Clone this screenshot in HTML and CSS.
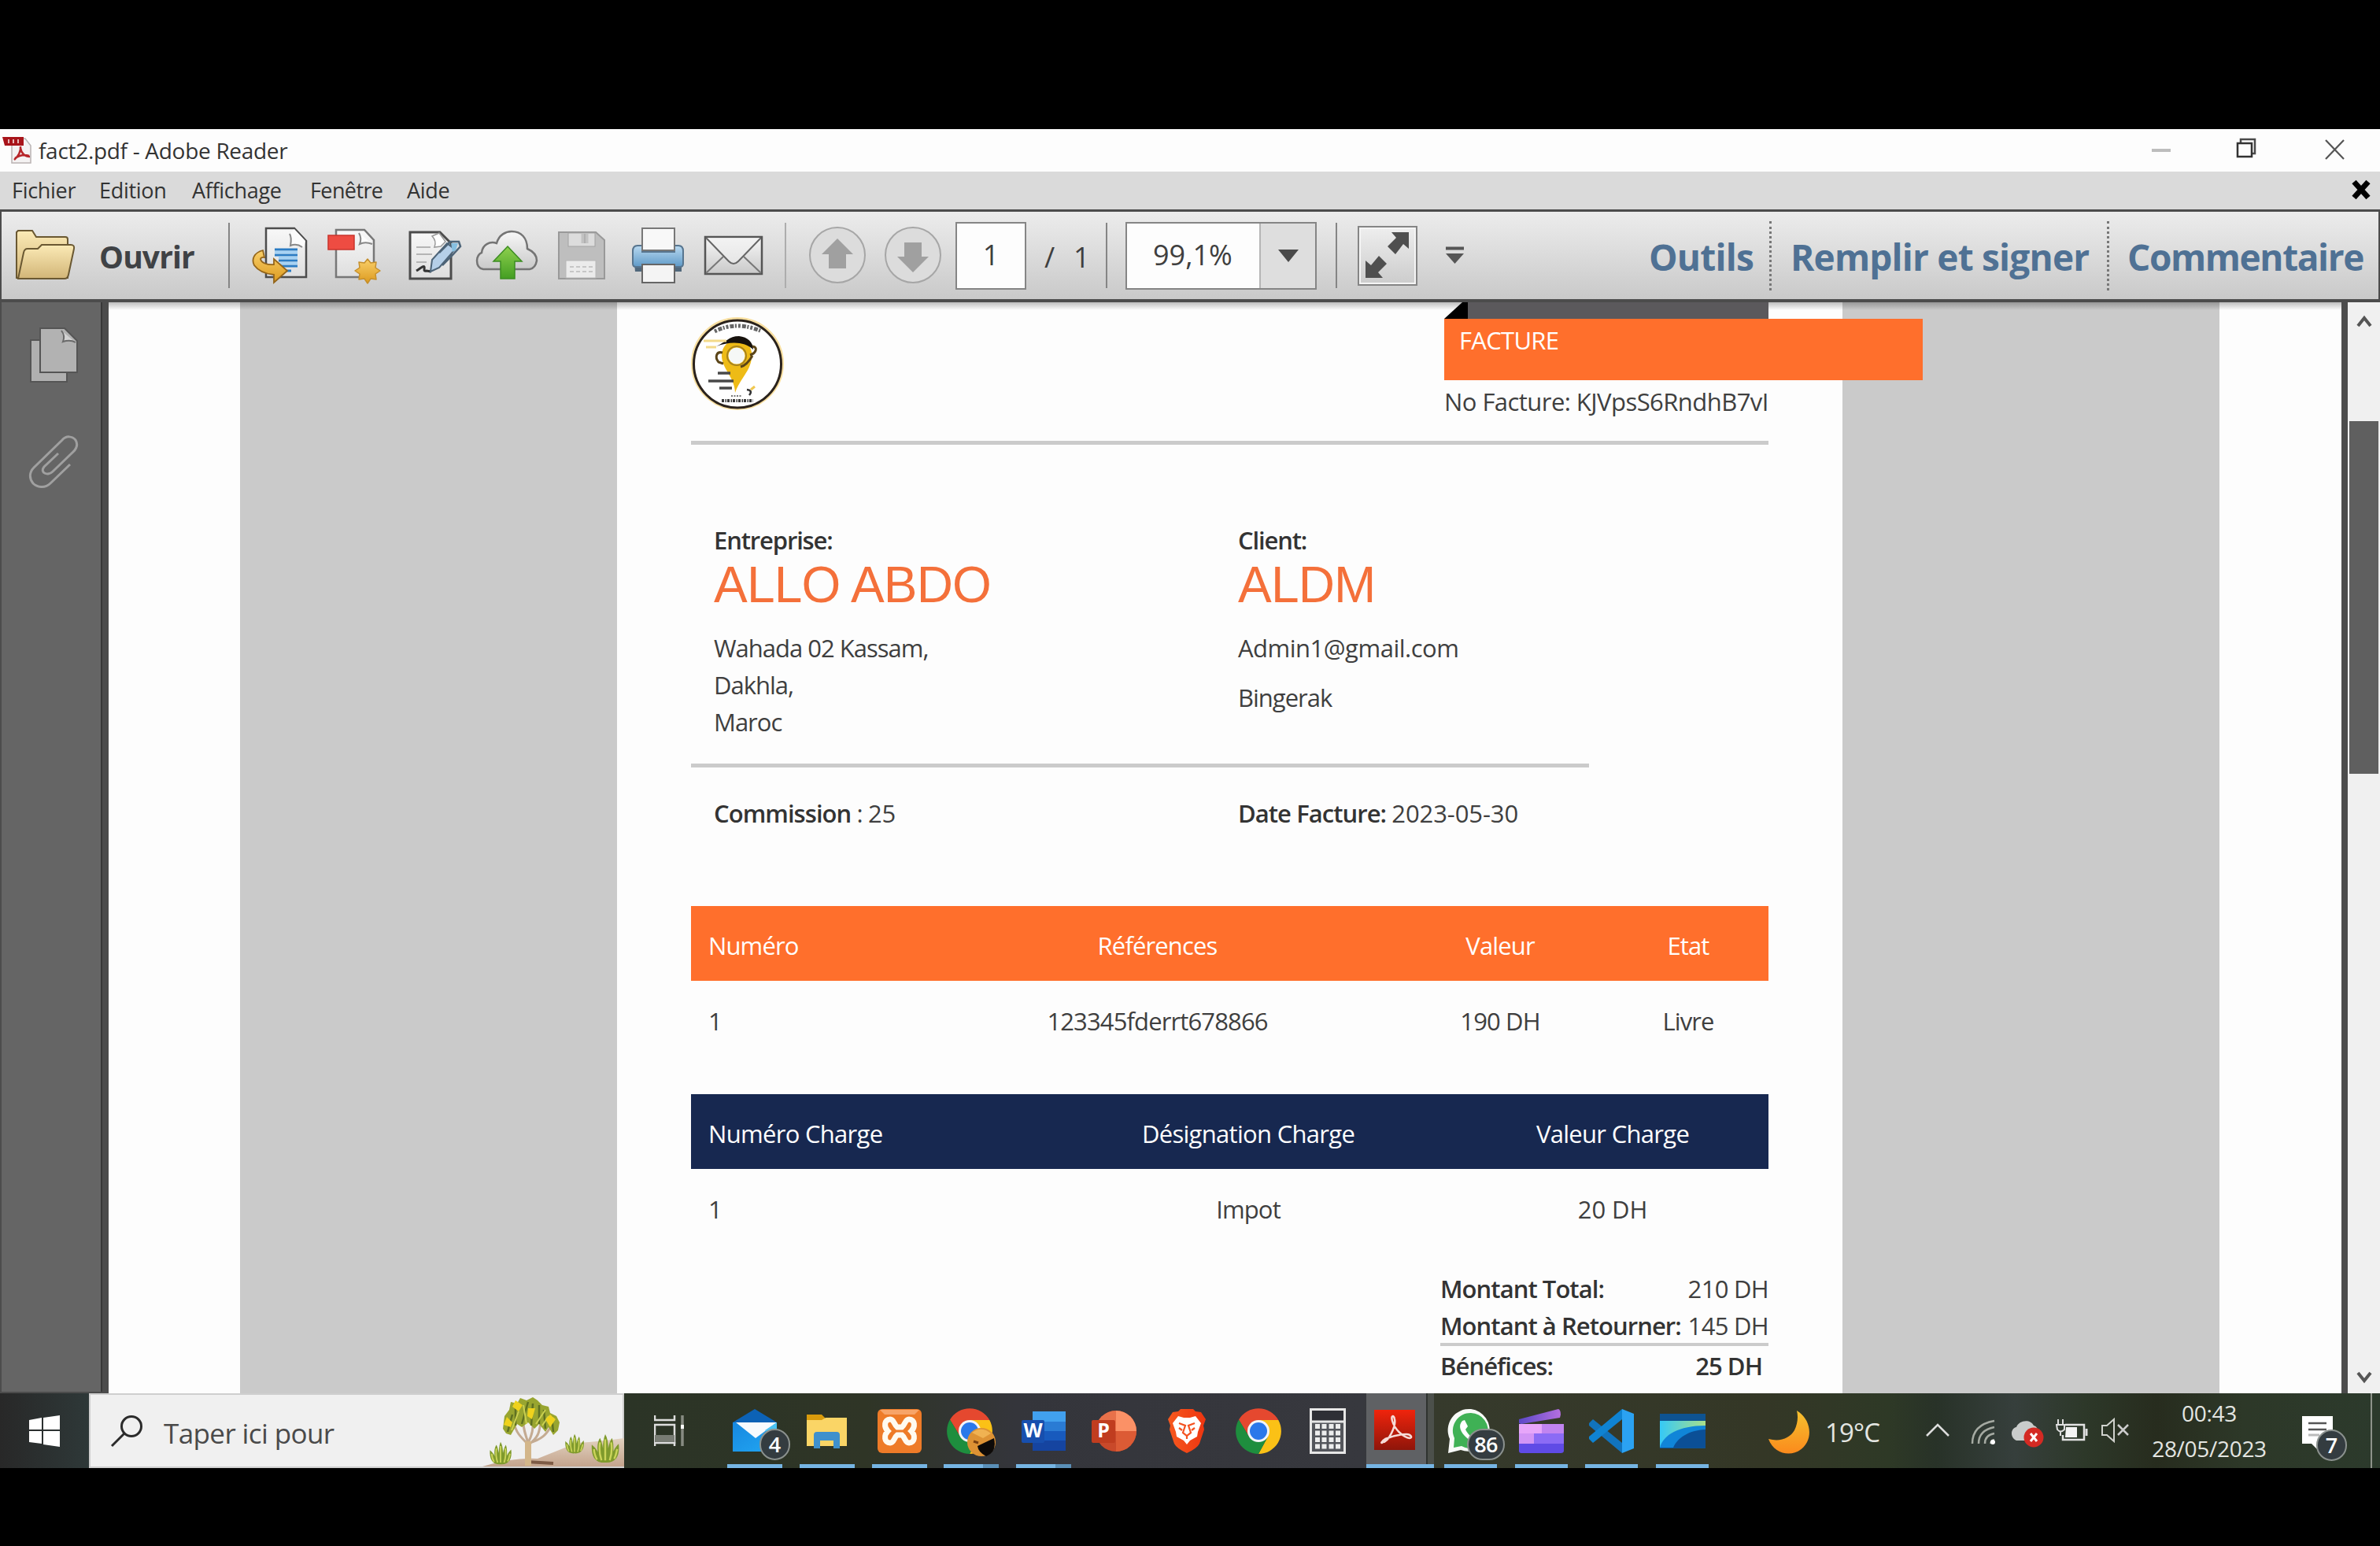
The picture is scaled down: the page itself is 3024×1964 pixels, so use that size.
FILE: index.html
```html
<!DOCTYPE html>
<html lang="fr">
<head>
<meta charset="utf-8">
<title>fact2.pdf - Adobe Reader</title>
<link rel="stylesheet" href="styles.css">
</head>
<body>
<svg width="0" height="0" class="defs">
  <defs>
    <linearGradient id="gFolder" x2="0" y2="1"><stop offset="0" stop-color="#fbeab6"/><stop offset="1" stop-color="#d2b577"/></linearGradient>
    <linearGradient id="gPaper" x2="0" y2="1"><stop offset="0" stop-color="#f8f8f8"/><stop offset="1" stop-color="#dedede"/></linearGradient>
    <linearGradient id="gCloud" x2="0" y2="1"><stop offset="0" stop-color="#f8f8f8"/><stop offset="1" stop-color="#c9c9c9"/></linearGradient>
    <linearGradient id="gGold" x2="0" y2="1"><stop offset="0" stop-color="#f9cf6a"/><stop offset="1" stop-color="#dc9a1e"/></linearGradient>
    <linearGradient id="gGreen" x2="0" y2="1"><stop offset="0" stop-color="#8ed04e"/><stop offset="1" stop-color="#449e22"/></linearGradient>
    <linearGradient id="gBlue" x2="0" y2="1"><stop offset="0" stop-color="#b9d9f0"/><stop offset="1" stop-color="#5f9ac8"/></linearGradient>
    <linearGradient id="gMoon" x2="0" y2="1"><stop offset="0" stop-color="#f5c12f"/><stop offset="1" stop-color="#fb8a1c"/></linearGradient>
    <linearGradient id="gMail" x2="1" y2="1"><stop offset="0" stop-color="#1788e0"/><stop offset="1" stop-color="#22a7f2"/></linearGradient>
    <linearGradient id="gAcro" x2="0" y2="1"><stop offset="0" stop-color="#f0240c"/><stop offset="1" stop-color="#8e150a"/></linearGradient>
    <linearGradient id="gBrave" x2="1" y2="0"><stop offset="0" stop-color="#f6591f"/><stop offset="1" stop-color="#ee3510"/></linearGradient>
    <linearGradient id="gClip" x2="1" y2="0"><stop offset="0" stop-color="#5b48c8"/><stop offset="1" stop-color="#b46fe0"/></linearGradient>
    <linearGradient id="gScreen" x2="1" y2="0"><stop offset="0" stop-color="#35c9f7"/><stop offset="1" stop-color="#a9e08a"/></linearGradient>
    <symbol id="chrome" viewBox="0 0 58 58">
      <path d="M29 15H54.300A29 29 0 0 1 29 58L41 36Z" fill="#fbc116"/>
      <path d="M4 14.500A29 29 0 0 1 54.300 15H29L17 36Z" fill="#e5482f"/>
      <path d="M4 14.500 17 36 41 36 29 58A29 29 0 0 1 4 14.500Z" fill="#1e8e3e"/>
      <circle cx="29" cy="29" r="14" fill="#f2f4f8"/><circle cx="29" cy="29" r="11" fill="#2a78ea"/>
    </symbol>
    <symbol id="bush" viewBox="0 0 40 40">
      <path d="M20 39C6 40 1 30 2 15 5 18 8 20 10 25 9 17 10 10 13 6 15 10 16 14 17 20 17 12 18 6 20 1 23 6 24 12 24 20 25 14 27 9 29 6 31 11 31 17 31 24 33 19 36 16 38 14 40 30 34 40 20 39Z" fill="#7f9a2c"/>
      <path d="M9 35C6 29 5 24 5 21M15 36C12 27 12 18 13 12M20 36V8M26 36C29 27 29 18 28 12M32 34C35 28 35 24 36 21" fill="none" stroke="#cbd45a" stroke-width="2.500"/>
    </symbol>
  </defs>
</svg>

<div class="window">
  <header class="titlebar">
    <svg class="app-icon" width="38" height="36" viewBox="0 0 38 36">
      <path d="M10 3H30L37 12V34H13V12Z" fill="#f4f2f2" stroke="#b9b3b3" stroke-width="1.500"/>
      <path d="M1 1H28V12H4Z" fill="#a8141a"/><path d="M9 4V9M15 4V9M21 4V9" stroke="#e6b9b9" stroke-width="2"/>
      <path d="M16 30C21 26 25 19 24 13M24 15C25 22 30 26 36 26M17 28C23 24 29 23 35 25" fill="none" stroke="#b7262a" stroke-width="2.500"/>
    </svg>
    <span class="title">fact2.pdf - Adobe Reader</span>
    <svg class="win-buttons" width="240" height="36" viewBox="0 0 240 36">
      <path d="M0 18H24" stroke="#bdbdbd" stroke-width="4"/>
      <path d="M113 9V4H131V22H127" fill="none" stroke="#4a4a4a" stroke-width="2.500"/><rect x="109" y="9" width="18" height="17" fill="#fdfdfd" stroke="#333" stroke-width="2.500"/>
      <path d="M221 5 244 29M244 5 221 29" stroke="#555" stroke-width="2.200"/>
    </svg>
  </header>

  <nav class="menubar">
    <span class="m1">Fichier</span><span class="m2">Edition</span><span class="m3">Affichage</span><span class="m4">Fenêtre</span><span>Aide</span>
    <svg class="doc-close" width="26" height="26" viewBox="0 0 26 26"><path d="M4 3 22 23M22 3 4 23" stroke="#000" stroke-width="7"/></svg>
  </nav>

  <div class="toolbar">
    <svg class="i-folder" width="78" height="76" viewBox="0 0 78 76">
      <path d="M2 66V8L4 6H22L27 14H64Q67 14 67 17V66Z" fill="url(#gFolder)" stroke="#6a5832" stroke-width="2"/>
      <path d="M4 67 11 34Q12 29 16 29H29L34 24H71Q76 24 75 29L68 62Q67 67 63 67Z" fill="url(#gFolder)" stroke="#6a5832" stroke-width="2"/>
    </svg>
    <span class="open">Ouvrir</span>
    <i class="sep s1"></i>
    <svg class="i-export" width="72" height="76" viewBox="0 0 72 76">
      <path d="M18 3H54L69 19V65H18Z" fill="url(#gPaper)" stroke="#4c4c4c" stroke-width="2.500"/>
      <path d="M48 10C51 15 50 20 48 25 54 23 60 24 66 27L68 19 54 4Z" fill="#fcfcfc"/><path d="M48 10C51 15 50 20 49 25 54 23 60 24 64 27" fill="none" stroke="#888" stroke-width="2"/>
      <path d="M29 30H58M29 37H58M34 44H58M36 51H58M44 57H50" stroke="#2b7cc4" stroke-width="3"/><path d="M29 33.500H58M34 40.500H58M36 47.500H58" stroke="#a6d2f4" stroke-width="3.500"/>
      <path d="M14 31C3 34-1 42 3 50 8 57 18 61 28 62V72L45 57 28 42V49C20 50 12 47 11 42 12 39 14 40 16 40Z" fill="url(#gGold)" stroke="#94651a" stroke-width="1.800"/>
    </svg>
    <svg class="i-create" width="72" height="76" viewBox="0 0 72 76">
      <path d="M12 5H48L60 18V65H12Z" fill="url(#gPaper)" stroke="#777" stroke-width="2.500"/><path d="M41 9C44 14 44 18 42 23 48 20 53 21 58 23" fill="#fcfcfc" stroke="#888" stroke-width="2"/>
      <rect x="2" y="12" width="33" height="18" fill="#ee4c42" stroke="#c9352c" stroke-width="1.500"/>
      <path d="M52 42 56 47 63 46 62 53 68 57 62 61 63 68 56 67 52 73 48 67 41 68 42 61 36 57 42 53 41 46 48 47Z" fill="url(#gGold)" stroke="#c58f2c" stroke-width="1.500" stroke-linejoin="round"/>
    </svg>
    <svg class="i-edit" width="72" height="76" viewBox="0 0 72 76">
      <path d="M3 8H41L55 22V67H3Z" fill="url(#gPaper)" stroke="#4c4c4c" stroke-width="3"/><path d="M31 13C36 18 36 22 34 27L42 26 48 20 40 9Z" fill="#fff" stroke="#999" stroke-width="1.500"/>
      <path d="M11 27H29M11 36H31M11 46H24" stroke="#b5b5b5" stroke-width="2.200"/>
      <path d="M11 57C16 54 20 50 21 52 22 54 19 58 24 57L30 58" fill="none" stroke="#333" stroke-width="3"/>
      <path d="M29 58 31 43 50 22 60 30 40 53Z" fill="#b5cfe8" stroke="#4d6478" stroke-width="2"/><path d="M40 34 54 20H65L67 26 57 37 44 50" fill="none" stroke="#4d6478" stroke-width="2.500"/><path d="M55 22 64 22 61 31 57 33Z" fill="#86bfe0"/>
    </svg>
    <svg class="i-cloud" width="80" height="76" viewBox="0 0 80 76">
      <path d="M10 55C4 54 2 50 2 44 2 39 5 35 8 34 9 24 18 19 27 22 30 11 39 7 46 7 58 7 66 15 66 29 75 33 78 38 78 44 77 50 74 54 69 55Z" fill="url(#gCloud)" stroke="#747474" stroke-width="2.500"/>
      <path d="M41 26 59 45H50V67H32V45H23Z" fill="url(#gGreen)" stroke="#3c8d22" stroke-width="1.500"/>
    </svg>
    <svg class="i-save" width="62" height="76" viewBox="0 0 62 76">
      <path d="M2 8H49L60 18V67H2Z" fill="#bebebe" stroke="#999" stroke-width="2"/>
      <rect x="14" y="9" width="34" height="17" fill="#dcdcdc" stroke="#a2a2a2"/><path d="M35 10V22" stroke="#c2c2c2" stroke-width="9"/><path d="M35 10V22" stroke="#aaa" stroke-width="1.500"/>
      <rect x="11" y="44" width="38" height="22" fill="#ebebeb" stroke="#b8b8b8"/><path d="M16 52H45M16 58H45" stroke="#c6c6c6" stroke-width="2" stroke-dasharray="5 3"/>
    </svg>
    <svg class="i-print" width="68" height="76" viewBox="0 0 68 76">
      <path d="M4 48H64V58H5Z" fill="#50687c"/>
      <path d="M2 32Q2 25 8 25H14V33H55V25H60Q66 25 66 32V48Q66 52 62 52H6Q2 52 2 48Z" fill="url(#gBlue)" stroke="#57758f" stroke-width="2"/>
      <rect x="14" y="3" width="41" height="28" fill="#f8f8f8" stroke="#777" stroke-width="2"/>
      <rect x="14" y="49" width="41" height="23" fill="#f4f4f4" stroke="#666" stroke-width="2"/>
    </svg>
    <svg class="i-mail" width="76" height="76" viewBox="0 0 76 76">
      <rect x="2" y="14" width="72" height="47" fill="url(#gCloud)" stroke="#555" stroke-width="2.500"/>
      <path d="M3 60 25 39M73 60 51 39" stroke="#777" stroke-width="2"/><path d="M3 15 32 45Q38 51 44 45L73 15" fill="#f0f0f0" fill-opacity=".6" stroke="#666" stroke-width="2"/>
    </svg>
    <i class="sep s2"></i>
    <svg class="i-nav1" width="74" height="76" viewBox="0 0 74 76"><circle cx="37" cy="37" r="35" fill="#dcdcdc" stroke="#a6a6a6" stroke-width="2"/><path d="M37 16 57 36H48V54H26V36H17Z" fill="#a0a0a0"/></svg>
    <svg class="i-nav2" width="74" height="76" viewBox="0 0 74 76"><circle cx="37" cy="37" r="35" fill="#dcdcdc" stroke="#a6a6a6" stroke-width="2"/><path d="M37 59 57 39H48V21H26V39H17Z" fill="#a0a0a0"/></svg>
    <span class="page-box">1</span>
    <span class="page-count"><b class="slash">/</b>1</span>
    <i class="sep s3"></i>
    <span class="zoom-box"><span class="zoom-value">99,1%</span><span class="zoom-drop"><svg width="26" height="18" viewBox="0 0 26 18"><path d="M0 1H26L13 17Z" fill="#4a4a4a"/></svg></span></span>
    <i class="sep s4"></i>
    <span class="expand"><svg width="70" height="70" viewBox="0 0 70 70"><path d="M41 6H63V27L56 21 46 34 36 24 47 13Z" fill="#4f4f4f"/><path d="M8 42 15 48 25 36 35 46 24 57 30 64H8Z" fill="#4f4f4f"/></svg></span>
    <svg class="i-more" width="24" height="24" viewBox="0 0 24 24"><path d="M0 2.500H23" stroke="#555" stroke-width="4"/><path d="M0 9H23L11.500 22Z" fill="#555"/></svg>
    <span class="panel p1">Outils</span><span class="panel p2">Remplir et signer</span><span class="panel p3">Commentaire</span>
  </div>

  <div class="workspace">
    <aside class="side">
      <svg class="pages" width="64" height="72" viewBox="0 0 64 72"><path d="M2 17H48V70H2Z" fill="#b0b0b0" stroke="#555" stroke-width="2"/><path d="M14 2H45L61 18V58H14Z" fill="#b2b2b2" stroke="#555" stroke-width="2"/><path d="M41 5C45 10 45 14 43 19 49 17 54 17 59 20" fill="#d3d3d3" stroke="#6a6a6a" stroke-width="2"/></svg>
      <svg class="clip" width="64" height="72" viewBox="0 0 64 72"><path d="M53 39 28 63C21 70 11 68 6 63 1 57 1 49 7 43L43 8C48 2 56 3 60 8 63 13 62 18 57 23L31 48C25 54 14 50 20 42L38 25" fill="none" stroke="#a0a0a0" stroke-width="3"/></svg>
    </aside>
    <main class="canvas">
      <article class="page">
        <section class="head">
          <svg class="logo" width="120" height="122" viewBox="0 0 120 122">
            <circle cx="60" cy="60" r="57" fill="#fff" stroke="#f8dfa0" stroke-width="4"/><circle cx="60" cy="60.500" r="55.500" fill="#fff" stroke="#2a221c" stroke-width="3"/>
            <path d="M31 19Q59 5 91 19" fill="none" stroke="#666" stroke-width="5" stroke-dasharray="3 2 5 1.500 2 2"/>
            <path d="M57 97C57 78 40 66 40 50 40 38 48 30 60 30 72 30 80 40 78 53 76 70 64 78 57 97Z" fill="#eebb16"/>
            <path d="M33 38C45 33 49 25 62 25 73 26 80 33 80 42 69 32 52 31 33 38Z" fill="#17120d"/>
            <circle cx="59" cy="50" r="12" fill="none" stroke="#a8831c" stroke-width="2"/><circle cx="59" cy="50" r="10.500" fill="#f6f8f6"/>
            <path d="M41 46C33 44 31 52 36 58L42 60M79 38C87 39 83 47 76 49M64 64Q72 62 79 50" fill="none" stroke="#5b4518" stroke-width="3"/>
            <path d="M17 31H46M20 39H33" stroke="#f3da8a" stroke-width="3"/>
            <path d="M35 72H51M23 82H55M37 91H53" stroke="#484848" stroke-width="3.500"/>
            <path d="M52 101H66" stroke="#777" stroke-width="2" stroke-dasharray="2 1.500"/><path d="M72 93Q80 94 75 100" fill="none" stroke="#333" stroke-width="2.500"/><path d="M77 93 82 89" stroke="#f0c850" stroke-width="3"/>
            <path d="M40 107H80" stroke="#3a3a3a" stroke-width="4" stroke-dasharray="3 1.500 1.500 1"/>
          </svg>
          <div class="tag">
            <div class="tag-fold"></div>
            <div class="tag-bar">FACTURE</div>
            <div class="tag-no">No Facture: KJVpsS6RndhB7vI</div>
          </div>
        </section>
        <hr class="rule full">
        <section class="parties">
          <div>
            <div class="label">Entreprise:</div>
            <div class="name">ALLO ABDO</div>
            <div class="line">Wahada 02 Kassam,</div><div class="line">Dakhla,</div><div class="line">Maroc</div>
          </div>
          <div>
            <div class="label">Client:</div>
            <div class="name">ALDM</div>
            <div class="line mail">Admin1@gmail.com</div><div class="line">Bingerak</div>
          </div>
        </section>
        <hr class="rule part">
        <section class="meta">
          <div><b>Commission</b> : <span class="num">25</span></div>
          <div><b>Date Facture:</b> <span class="num">2023-05-30</span></div>
        </section>
        <section class="table four">
          <div class="th"><span>Numéro</span><span>Références</span><span>Valeur</span><span>Etat</span></div>
          <div class="td"><span>1</span><span>123345fderrt678866</span><span>190 DH</span><span>Livre</span></div>
        </section>
        <section class="table three">
          <div class="th"><span>Numéro Charge</span><span>Désignation Charge</span><span>Valeur Charge</span></div>
          <div class="td"><span>1</span><span>Impot</span><span class="num">20 DH</span></div>
        </section>
        <section class="totals">
          <div><b>Montant Total:</b><span class="amount">210 DH</span></div>
          <div><b>Montant à Retourner:</b><span class="amount">145 DH</span></div>
          <div class="last"><b>Bénéfices:</b><b class="amount">25 DH</b></div>
        </section>
      </article>
    </main>
    <div class="scroll">
      <svg width="20" height="16" viewBox="0 0 20 16"><path d="M2 14 10 4 18 14" fill="none" stroke="#555" stroke-width="4"/></svg>
      <div class="thumb"></div>
      <svg class="down" width="20" height="16" viewBox="0 0 20 16"><path d="M2 2 10 12 18 2" fill="none" stroke="#555" stroke-width="4"/></svg>
    </div>
  </div>

  <footer class="taskbar">
    <div class="start"><svg width="40" height="40" viewBox="0 0 40 40"><path d="M0 6 16 3V18H0ZM18 3 39 0V18H18ZM0 20H16V36L0 34ZM18 20H39V40L18 37Z" fill="#fff"/></svg></div>
    <div class="search">
      <svg class="glass" width="42" height="42" viewBox="0 0 42 42"><circle cx="27" cy="14" r="12.500" fill="none" stroke="#2b2b2b" stroke-width="3"/><path d="M18 23 2 39" stroke="#2b2b2b" stroke-width="3"/></svg>
      <span class="query">Taper ici pour</span>
      <svg class="scene" width="180" height="90" viewBox="0 0 180 90">
        <defs><linearGradient id="gSand" x2="0" y2="1"><stop offset="0" stop-color="#e2d2c0"/><stop offset="1" stop-color="#c4a48d"/></linearGradient></defs>
        <path d="M0 90 Q40 78 70 80 L120 60 Q150 58 180 54V90Z" fill="url(#gSand)"/><path d="M56 84 90 86" stroke="#7d5b45" stroke-width="4"/>
        <path d="M58 88V58M58 62C48 52 42 46 40 34M58 60C54 48 52 42 52 34M58 60C64 48 64 42 64 34M60 60C80 54 82 46 88 38M59 62C72 52 72 46 74 34" fill="none" stroke="#c4ab92" stroke-width="3"/><path d="M58 89V58" stroke="#d3b68a" stroke-width="8"/>
        <path d="M26 42 28 26 34 18 36 8 44 10 48 3 56 6 64 2 70 6 76 12 84 14 86 22 94 26 98 34 96 44 90 50 84 40 80 46 72 36 66 42 58 34 50 40 44 36 36 50 30 48Z" fill="#98a530"/>
        <path d="M32 46 38 24M42 38 42 14M50 36 58 8M62 38 64 10M72 36 72 12M80 42 78 18M90 46 88 26" stroke="#5f7122" stroke-width="2.500"/><path d="M37 44 46 20M56 36 52 12M68 36 80 18M76 38 84 26" stroke="#cbd050" stroke-width="2"/>
        <path d="M31 27 38 34 36 40 27 37ZM42 6 51 12 46 20 38 14ZM58 16 67 16 63 30 57 26ZM86 24 93 30 86 40 80 30Z" fill="#efd21d"/>
        <use href="#bush" x="6" y="58" width="34" height="30"/><use href="#bush" x="102" y="48" width="30" height="26"/><use href="#bush" x="134" y="48" width="44" height="38"/>
      </svg>
    </div>
    <div class="task view"><svg width="40" height="42" viewBox="0 0 40 42"><path d="M1 1V7H26V1M1 40V35M26 40V35" fill="none" stroke="#ddd" stroke-width="2.500"/><rect x="1" y="13" width="25" height="23" fill="none" stroke="#ddd" stroke-width="2.500"/><rect x="1" y="26" width="25" height="9" fill="#787c74"/><path d="M36 1V40" stroke="#878b82" stroke-width="3.500"/><path d="M36 13V18" stroke="#fff" stroke-width="4"/></svg></div>
    <div class="task on w-mail"><svg width="58" height="58" viewBox="0 0 58 58"><path d="M1 18 29 1 57 18V30H1Z" fill="#0c62b6"/><path d="M1 18H57V55H1Z" fill="url(#gMail)"/><path d="M5 18H57L30 38Z" fill="#f7fafd"/><path d="M57 18V40L42 28Z" fill="#49c2f4"/></svg><span class="badge">4</span></div>
    <div class="task on w-files"><svg width="54" height="58" viewBox="0 0 54 58"><path d="M1 8H20L24 12V24H1Z" fill="#d99b0c"/><path d="M1 15H20L25 12H52V48H1Z" fill="#fad566"/><path d="M10 51V34Q10 30 14 30H39Q43 30 43 34V51H35V41H18V51Z" fill="#3f90cc"/></svg></div>
    <div class="task on w-xampp"><svg width="58" height="58" viewBox="0 0 58 58"><rect x="1" y="1" width="56" height="56" rx="6" fill="#ee7b28"/><path d="M4 2H54L48 8H10Z" fill="#f7a468"/><path d="M17 14C22 14 22 21 26 24H32C36 21 36 14 41 14 49 14 49 24 44 29 49 34 49 44 41 44 36 44 36 37 32 34H26C22 37 22 44 17 44 9 44 9 34 14 29 9 24 9 14 17 14Z" fill="none" stroke="#fffaf0" stroke-width="7"/></svg></div>
    <div class="task on dbl w-chrome"><svg width="62" height="64" viewBox="0 0 62 64"><use href="#chrome" width="58" height="58"/><circle cx="44" cy="43" r="18" fill="#dd9234"/><path d="M32 31Q44 22 56 32L46 38Z" fill="#f0b252"/><path d="M39 48 60 38Q64 56 50 61 40 56 39 48Z" fill="#0d0a08"/><path d="M34 42 40 44" stroke="#7a4211" stroke-width="3"/></svg></div>
    <div class="task on dbl w-word"><svg width="58" height="58" viewBox="0 0 58 58"><path d="M15 4H57V17H15Z" fill="#41a0ee"/><path d="M15 17H57V29H15Z" fill="#2a7bd4"/><path d="M15 29H57V41H15Z" fill="#185abd"/><path d="M15 41H57V54H15Z" fill="#1544a0"/><rect x="1" y="15" width="29" height="29" rx="2" fill="#174fae"/><text x="15.500" y="37" class="glyph">W</text></svg></div>
    <div class="task w-ppt"><svg width="58" height="58" viewBox="0 0 58 58"><circle cx="31" cy="29" r="26" fill="#c9492a"/><path d="M31 3A26 26 0 0 1 57 29H31Z" fill="#fb9166"/><path d="M31 3V29H5A26 26 0 0 1 31 3Z" fill="#e8714a"/><path d="M57 29A26 26 0 0 1 31 55V29Z" fill="#dc5b35"/><rect x="0" y="15" width="30" height="29" rx="2" fill="#c03d1f"/><text x="15" y="37" class="glyph">P</text></svg></div>
    <div class="task w-brave"><svg width="50" height="58" viewBox="0 0 50 58"><path d="M14 4 17 1H33L36 4 43 5 49 14 46 22 47 27 41 45Q38 51 25 57 12 51 9 45L3 27 4 22 1 14 7 5Z" fill="url(#gBrave)"/><path d="M14 10 21 12H29L36 10 43 19 39 30 38 36 29 41 25 46 21 41 12 36 11 30 7 19Z" fill="#fff"/><path d="M15 19 23 22 20 31 25 35 30 31 27 22 35 19M25 35V39M15 25 19 28M35 25 31 28" fill="none" stroke="#f4511f" stroke-width="2.200"/></svg></div>
    <div class="task w-chrome2"><svg width="58" height="58"><use href="#chrome" width="58" height="58"/></svg></div>
    <div class="task w-calc"><svg width="46" height="58" viewBox="0 0 46 58"><rect x="1.500" y="1.500" width="43" height="55" fill="#54565c" stroke="#e6e6e6" stroke-width="3"/><rect x="3" y="3" width="40" height="13" fill="#2e2f36"/><path d="M2 17H44" stroke="#e6e6e6" stroke-width="3"/><path d="M10 20V52M18.500 20V52M27.500 20V52M36 20V52" stroke="#ededed" stroke-width="6" stroke-dasharray="6 2.500"/></svg></div>
    <div class="task on active w-acro"><svg width="54" height="58" viewBox="0 0 54 58"><rect x="1" y="2" width="52" height="51" fill="url(#gAcro)"/><path d="M12 43C19 43 29 23 27 14 26 8 22 9 24 16 27 27 38 37 46 38 50 38 48 33 42 33 32 33 22 36 15 39 10 42 9 46 12 43Z" fill="none" stroke="#f6dcd8" stroke-width="2.500"/></svg></div>
    <div class="task on w-whats"><svg width="60" height="58" viewBox="0 0 60 58"><path d="M30 1A27 27 0 1 1 17 53L1 57 3 39A27 27 0 0 1 30 1Z" fill="#f8faf8"/><path d="M30 6A22.500 22.500 0 1 1 18 48L8 50 9 38A22.500 22.500 0 0 1 30 6Z" fill="#3fb155"/><path d="M19 16C13 22 17 31 24 37 31 44 38 46 43 40L36 34 32 37C28 35 25 31 23 27L26 23 22 15Z" fill="#fff"/></svg><span class="badge wide">86</span></div>
    <div class="task on w-clip"><svg width="60" height="58" viewBox="0 0 60 58"><path d="M1 14 51 1Q54 2 54 8L53 12 4 20 1 19Z" fill="url(#gClip)"/><path d="M1 20H58V32H1Z" fill="#c184f0"/><path d="M1 20H30V32H1Z" fill="#e7a6fa"/><path d="M1 32H58V45H1Z" fill="#8b6bf5"/><path d="M1 32H20V45H1Z" fill="#d295f5"/><path d="M1 45H58V54Q58 57 54 57H4Q1 57 1 54Z" fill="#5f4be6"/></svg></div>
    <div class="task on w-code"><svg width="60" height="58" viewBox="0 0 60 58"><path d="M1 19 6 14 43 44V57L1 22Z" fill="#1173bd"/><path d="M1 39 6 44 43 14V1L1 36Z" fill="#0f83d2"/><path d="M43 1 58 7V51L43 57Z" fill="#2ba2f2"/></svg></div>
    <div class="task on w-last"><svg width="58" height="58" viewBox="0 0 58 58"><rect x="0" y="7" width="58" height="44" fill="#0e5391"/><path d="M0 16H58V50H0Z" fill="url(#gScreen)"/><path d="M0 50C4 34 24 22 58 22V50Z" fill="#1085d8"/><path d="M17 50C22 38 36 28 58 27V50Z" fill="#0b4f96"/></svg></div>

    <svg class="moon" width="56" height="58" viewBox="0 0 56 58"><path d="M37 1C51 9 57 27 50 41 40 61 10 61 1 37 16 41 28 36 34 26 38 18 39 9 37 1Z" fill="url(#gMoon)"/></svg>
    <span class="temp">19°C</span>
    <svg class="tray-caret" width="30" height="18" viewBox="0 0 30 18"><path d="M1 16 15 2 29 16" fill="none" stroke="#ddd" stroke-width="2.500"/></svg>
    <svg class="wifi" width="34" height="34" viewBox="0 0 34 34"><path d="M2 31Q2 7 30 2M10 31Q10 14 30 10M18 31Q18 20 30 18" fill="none" stroke="#a5aaa2" stroke-width="2.500"/><path d="M25 31Q26 26 30 26" fill="none" stroke="#a5aaa2" stroke-width="2"/><circle cx="28" cy="29" r="3" fill="#fff"/></svg>
    <svg class="cloud-err" width="42" height="36" viewBox="0 0 42 36"><path d="M7 26C-2 22 0 10 7 9 10 0 25-2 29 7 38 9 34 26 28 26Z" fill="#c9cccb"/><circle cx="29" cy="22" r="12.500" fill="#d42a23"/><path d="M25 17 33 27M33 17 25 27" stroke="#fff" stroke-width="3"/></svg>
    <svg class="battery" width="42" height="30" viewBox="0 0 42 30"><path d="M12 7H36V26H9V20" fill="none" stroke="#e2e2e2" stroke-width="2.500"/><path d="M13 10H27V23H12Z" fill="#f4f4f4"/><path d="M39 12V21" stroke="#ddd" stroke-width="3"/><path d="M3 0V6M9 0V6M1 7H11V13Q6 18 2 13ZM6 16V21" fill="none" stroke="#ddd" stroke-width="2"/></svg>
    <svg class="mute" width="36" height="32" viewBox="0 0 36 32"><path d="M1 10H7L16 2V30L7 22H1Z" fill="none" stroke="#d0d2cd" stroke-width="2"/><path d="M21 9 34 22M34 9 21 22" stroke="#ccc" stroke-width="2.500"/></svg>
    <div class="clock"><span>00:43</span><span>28/05/2023</span></div>
    <div class="notif"><svg width="40" height="46" viewBox="0 0 40 46"><path d="M0 1H39V36H28L20 44 12 36H0Z" fill="#fff"/><path d="M8 10H31M8 18H31" stroke="#555" stroke-width="2.500"/><path d="M8 25H22" stroke="#bbb" stroke-width="3"/></svg><span class="badge">7</span></div>
    <i class="peek"></i>
  </footer>
</div>
</body>
</html>
```
FILE: styles.css
```css
* { box-sizing: border-box; }
body {
  margin: 0;
  height: 1964px;
  overflow: hidden;
  background: #000;
  font-family: "Open Sans", "Noto Sans", sans-serif;
  color: #3f3f3f;
}
.defs { position: absolute; }
svg { display: block; flex: none; }
b { font-weight: 600; }
.window {
  display: flex;
  flex-direction: column;
  width: 3024px;
  height: 1701px;
  margin-top: 164px;
}

/* title and menus */
.titlebar {
  display: flex;
  height: 54px;
  background: #fdfdfd;
}
.app-icon { margin: 9px 0 0 2px; }
.title {
  margin: 7px auto 0 9px;
  font-size: 28px;
  line-height: 40px;
  letter-spacing: -0.3px;
  color: #333;
}
.win-buttons { margin: 9px 50px 0 0; overflow: visible; }
.menubar {
  display: flex;
  height: 48px;
  padding-left: 15px;
  background: #dadada;
  font-size: 27px;
  line-height: 47px;
  letter-spacing: -0.3px;
  color: #333;
}
.m1 { width: 111px; }
.m2 { width: 118px; }
.m3 { width: 150px; }
.m4 { width: 123px; letter-spacing: -0.6px; }
.doc-close { margin: 10px 11px 0 auto; }

/* toolbar */
.toolbar {
  display: flex;
  align-items: center;
  height: 118px;
  border: solid #4c4c4c;
  border-width: 3px 2px 4px 2px;
  background: linear-gradient(#ececec, #e2e2e2 30%, #c9c9c9);
}
.toolbar > * { flex: none; }
.sep { width: 2px; height: 83px; background: #858585; }
.i-folder { margin-left: 17px; }
.open {
  width: 120px;
  margin: 2px 0 0 29px;
  font-size: 39px;
  font-weight: 700;
  letter-spacing: -0.9px;
  color: #3f4245;
}
.s1 { margin-left: 44px; }
.i-export { margin-left: 28px; }
.i-create { margin-left: 23px; }
.i-edit { margin-left: 31px; }
.i-cloud { margin-left: 14px; }
.i-save { margin-left: 24px; }
.i-print { margin-left: 32px; }
.i-mail { margin-left: 24px; }
.s2 { margin-left: 27px; background: #adadad; }
.i-nav1 { margin-left: 28px; }
.i-nav2 { margin-left: 22px; }
.page-box {
  width: 90px;
  height: 86px;
  margin-left: 17px;
  border: 2px solid #858585;
  background: #fdfdfd;
  font-size: 36px;
  line-height: 79px;
  text-align: center;
}
.page-count {
  display: flex;
  width: 60px;
  margin: 3px 0 0 23px;
  font-size: 36px;
}
.slash { width: 37px; font-weight: 400; }
.s3 { margin-left: 18px; }
.zoom-box {
  display: flex;
  width: 243px;
  height: 86px;
  margin-left: 23px;
  border: 2px solid #858585;
}
.zoom-value {
  width: 168px;
  padding-left: 33px;
  background: #fdfdfd;
  font-size: 36px;
  line-height: 79px;
}
.zoom-drop {
  display: flex;
  flex: 1;
  align-items: center;
  justify-content: center;
  border-left: 2px solid #b5b5b5;
  background: #dedede;
}
.s4 { margin-left: 24px; }
.expand {
  width: 76px;
  height: 76px;
  margin-left: 26px;
  border: 2px solid #858585;
  background: linear-gradient(#eee, #ccc);
  box-shadow: inset 0 0 0 2px #f5f5f5;
}
.i-more { margin-left: 36px; }
.panel {
  height: 88px;
  font-size: 46px;
  font-weight: 700;
  line-height: 90px;
  letter-spacing: -0.8px;
  white-space: nowrap;
  color: #4f7194;
}
.p1 { width: 156px; margin-left: auto; border-right: 3px dotted #777; }
.p2 { width: 429px; padding-left: 24px; border-right: 3px dotted #777; }
.p3 { width: 342px; padding-left: 23px; letter-spacing: -1.4px; }

/* document area */
.workspace { display: flex; height: 1386px; background: #4c4c4c; }
.side {
  width: 138px;
  padding: 31px 0 0 34px;
  border: solid #4c4c4c;
  border-width: 0 8px 2px 2px;
  background: linear-gradient(90deg, #656565 126px, #383838 126px);
}
.pages { margin-left: 1px; }
.clip { margin-top: 64px; }
.canvas {
  position: relative;
  width: 2837px;
  padding-left: 646px;
  background: linear-gradient(90deg, #fdfdfd 167px, #cacaca 167px, #cacaca 2682px, #fdfdfd 2682px);
}
.canvas::before {
  content: "";
  position: absolute;
  inset: 0 0 auto;
  height: 10px;
  background: linear-gradient(#00000040, transparent);
}
.page {
  width: 1557px;
  height: 1386px;
  padding-left: 94px;
  background: #fdfdfd;
  font-size: 31px;
  line-height: 47px;
  letter-spacing: -0.87px;
  white-space: nowrap;
}
.page b { letter-spacing: -0.95px; color: #333; }
.page .num { letter-spacing: -0.1px; }
.head {
  display: flex;
  justify-content: space-between;
  width: 1369px;
  height: 176px;
}
.logo { margin: 18px 0 0 -1px; }
.tag { width: 412px; }
.tag-fold {
  height: 21px;
  background: linear-gradient(90deg, #000 30px, #5b595c 30px);
  clip-path: polygon(0 100%, 23px 0, 100% 0, 100% 100%);
}
.tag-bar {
  width: 608px;
  height: 78px;
  padding: 4px 0 0 19px;
  background: #ff6f2c;
  color: #fff;
  letter-spacing: -0.7px;
}
.tag-no { margin-top: 4px; letter-spacing: -0.55px; }
.rule { height: 5px; margin: 0; border: 0; background: #cbcbcb; }
.full { width: 1369px; }
.part { width: 1141px; }
.parties {
  display: grid;
  grid-template-columns: 666px 1fr;
  height: 405px;
  padding: 99px 0 0 29px;
}
.label { line-height: 45px; font-weight: 600; letter-spacing: -1.15px; color: #333; }
.name {
  margin: 1px 0 24px;
  font-family: "Liberation Sans", sans-serif;
  font-size: 64px;
  line-height: 66px;
  letter-spacing: -0.8px;
  color: #f4703a;
}
.line { letter-spacing: -1px; }
.mail { margin-bottom: 16px; letter-spacing: -0.5px; }
.meta {
  display: grid;
  grid-template-columns: 666px 1fr;
  height: 176px;
  padding: 35px 0 0 29px;
}
.table { width: 1369px; }
.th, .td { display: grid; text-align: center; }
.four > div { grid-template-columns: 294px 597px 274px 204px; }
.three > div { grid-template-columns: 443px 530px 396px; }
.th { height: 95px; line-height: 100px; background: #ff6f2c; color: #fff; }
.three .th { background: #172850; letter-spacing: -0.7px; }
.td { height: 144px; line-height: 103px; }
.th > :first-child, .td > :first-child { padding-left: 22px; text-align: left; }
.totals { width: 417px; margin: -15px 0 0 952px; }
.totals > div { display: flex; justify-content: space-between; }
.amount { letter-spacing: -0.7px; }
.totals .last {
  margin-top: -2px;
  padding: 2px 8px 0 0;
  border-top: 4px solid #cbcbcb;
}

.scroll {
  display: flex;
  flex-direction: column;
  align-items: center;
  width: 41px;
  margin-left: 8px;
  padding-top: 16px;
  background: #f0f0f0;
}
.thumb { width: 37px; height: 448px; margin-top: 119px; background: #5f5f5f; }
.down { margin: auto 0 12px; }

/* taskbar */
.taskbar {
  display: flex;
  height: 95px;
  background: linear-gradient(90deg, #282828 0, #2e3838 113px, #2b3426 792px, #2f3526 1100px, #34353b 1290px, #37383e 1730px, #363a2c 1822px, #343726 2240px, #2e3926 2400px, #283228 2460px, #363f3c 2560px, #2d3829 2650px, #272c1e 2740px, #2d3828 2850px, #2c3a2c 3024px);
  color: #e4e6e2;
}
.start { width: 113px; padding: 28px 0 0 37px; }
.search {
  display: flex;
  width: 680px;
  border: 2px solid #cfcfcf;
  background: #f0f0f0;
  color: #4a4a4a;
}
.glass { margin: 26px 0 0 25px; }
.query { margin: 20px 0 0 26px; font-size: 35px; line-height: 58px; letter-spacing: -0.6px; white-space: nowrap; }
.scene { margin: 1px -2px 0 auto; }
.task {
  position: relative;
  flex: none;
  display: flex;
  justify-content: center;
  width: 70px;
  height: 95px;
  padding-top: 19px;
}
.on { border-bottom: 5px solid #76b5e4; }
.dbl { border-image: linear-gradient(90deg, #76b5e4 48px, #5a8fb8 48px) 5; }
.view { width: 40px; margin-left: 38px; padding-top: 27px; }
.w-mail { margin-left: 53px; }
.w-files { margin-left: 22px; }
.w-xampp { margin-left: 22px; }
.w-chrome { margin-left: 21px; }
.w-word { margin-left: 22px; }
.w-ppt { margin-left: 20px; }
.w-brave { margin-left: 22px; }
.w-chrome2 { margin-left: 21px; }
.w-calc { margin-left: 18px; }
.active { width: 86px; margin-left: 14px; background: linear-gradient(90deg, #5f6164 76px, #2f3330 76px, #2f3330 78px, #4c504b 78px); }
.w-acro { margin-right: 13px; padding-right: 14px; }
.w-whats { width: 67px; }
.w-clip { width: 67px; margin-left: 23px; }
.w-code { width: 67px; margin-left: 22px; }
.w-last { width: 67px; margin-left: 23px; }
.badge {
  position: absolute;
  left: 41px;
  top: 45px;
  width: 39px;
  height: 40px;
  border: 2px solid #8b918e;
  border-radius: 20px;
  background: #343c40;
  color: #fff;
  font-size: 27px;
  font-weight: 600;
  line-height: 36px;
  text-align: center;
}
.wide { left: 29px; width: 48px; letter-spacing: -0.8px; }
.glyph { font: 700 25px "Open Sans", sans-serif; fill: #fff; text-anchor: middle; }
.moon { margin: 21px 0 0 75px; }
.temp { width: 80px; margin: 20px 0 0 17px; font-size: 33px; line-height: 60px; letter-spacing: -0.9px; }
.tray-caret { margin: 38px 0 0 48px; }
.wifi { margin: 33px 0 0 27px; }
.cloud-err { margin: 34px 0 0 17px; }
.battery { margin: 33px 0 0 15px; }
.mute { margin: 31px 0 0 16px; }
.clock {
  display: flex;
  flex-direction: column;
  align-items: center;
  width: 160px;
  margin: 3px 0 0 21px;
  font-size: 28px;
  line-height: 45px;
  letter-spacing: -0.3px;
}
.notif { position: relative; margin: 28px 0 0 38px; }
.notif .badge { left: 18px; top: 18px; }
.peek { width: 2px; height: 95px; margin: 0 10px 0 auto; background: #8d928a; }
```
